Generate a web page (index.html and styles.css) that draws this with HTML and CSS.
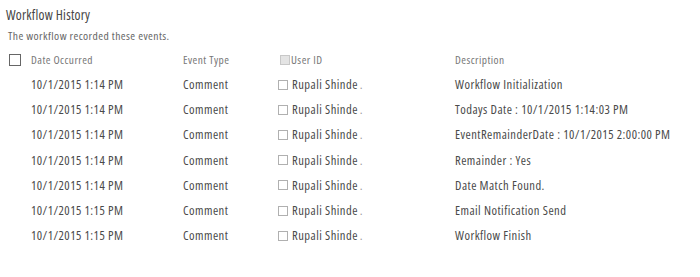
FILE: index.html
```html
<!DOCTYPE html>
<html>
<head>
<meta charset="utf-8">
<link rel="stylesheet" href="styles.css">
</head>
<body>
<div class="panel">
  <div class="title">Workflow History</div>
  <div class="subtitle">The workflow recorded these events.</div>
  <div class="grid">
    <div class="hrow">
      <div class="cell"><span class="selbox"></span></div>
      <div class="cell">Date Occurred</div>
      <div class="cell">Event Type</div>
      <div class="cell"><span class="hbox"></span>User ID</div>
      <div class="cell">Description</div>
    </div>
    <div class="row"><div class="cell"></div><div class="cell">10/1/2015 1:14 PM</div><div class="cell">Comment</div><div class="cell"><span class="ubox"></span>Rupali Shinde <span class="dot">.</span></div><div class="cell">Workflow Initialization</div></div>
    <div class="row"><div class="cell"></div><div class="cell">10/1/2015 1:14 PM</div><div class="cell">Comment</div><div class="cell"><span class="ubox"></span>Rupali Shinde <span class="dot">.</span></div><div class="cell">Todays Date : 10/1/2015 1:14:03 PM</div></div>
    <div class="row"><div class="cell"></div><div class="cell">10/1/2015 1:14 PM</div><div class="cell">Comment</div><div class="cell"><span class="ubox"></span>Rupali Shinde <span class="dot">.</span></div><div class="cell">EventRemainderDate : 10/1/2015 2:00:00 PM</div></div>
    <div class="row"><div class="cell"></div><div class="cell">10/1/2015 1:14 PM</div><div class="cell">Comment</div><div class="cell"><span class="ubox"></span>Rupali Shinde <span class="dot">.</span></div><div class="cell">Remainder : Yes</div></div>
    <div class="row"><div class="cell"></div><div class="cell">10/1/2015 1:14 PM</div><div class="cell">Comment</div><div class="cell"><span class="ubox"></span>Rupali Shinde <span class="dot">.</span></div><div class="cell">Date Match Found.</div></div>
    <div class="row"><div class="cell"></div><div class="cell">10/1/2015 1:15 PM</div><div class="cell">Comment</div><div class="cell"><span class="ubox"></span>Rupali Shinde <span class="dot">.</span></div><div class="cell">Email Notification Send</div></div>
    <div class="row"><div class="cell"></div><div class="cell">10/1/2015 1:15 PM</div><div class="cell">Comment</div><div class="cell"><span class="ubox"></span>Rupali Shinde <span class="dot">.</span></div><div class="cell">Workflow Finish</div></div>
  </div>
</div>
</body>
</html>
```
FILE: styles.css
```css
html, body {
  margin: 0;
  padding: 0;
  background: #ffffff;
}
.panel {
  font-family: "Open Sans", sans-serif;
  font-stretch: 75%;
  color: #444444;
  padding: 6px 0 0 6px;
}
.title {
  font-size: 13.5px;
  line-height: 18px;
  letter-spacing: 0.25px;
  color: #444444;
}
.subtitle {
  font-size: 11.6px;
  line-height: 16px;
  letter-spacing: 0.43px;
  color: #666666;
  margin-top: 4px;
  padding-left: 2px;
}
.grid {
  padding-left: 3px;
  margin-top: 3px;
}
.hrow, .row {
  display: grid;
  grid-template-columns: 22px 152px 95px 177px 1fr;
  align-items: center;
}
.hrow {
  height: 25px;
  font-size: 11.4px;
  letter-spacing: 0.45px;
  color: #777777;
}
.row {
  height: 25.2px;
  font-size: 12.6px;
  letter-spacing: 0.45px;
  color: #4a4a4a;
}
.cell {
  display: flex;
  align-items: center;
  white-space: nowrap;
}
.selbox {
  width: 10px;
  height: 10px;
  border: 1px solid #666666;
  display: inline-block;
}
.hbox {
  width: 8px;
  height: 8px;
  border: 1px solid #c8c8c8;
  background: #e4e4e4;
  margin: 0 1px 0 2px;
  display: inline-block;
}
.ubox {
  width: 8px;
  height: 8px;
  border: 1px solid #b0b0b0;
  display: inline-block;
  margin-right: 4px;
}
.dot {
  color: #999999;
  margin-left: 2px;
}
```
